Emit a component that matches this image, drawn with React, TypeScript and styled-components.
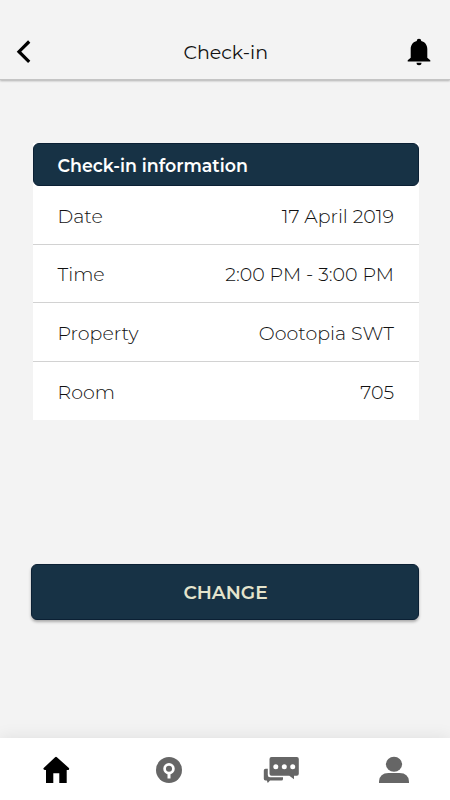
import React from "react";
import styled, { createGlobalStyle } from "styled-components";

const GlobalStyle = createGlobalStyle`
  * { box-sizing: border-box; }
  body { margin: 0; background: #f3f3f3; }
`;

const Screen = styled.div`
  width: 450px;
  height: 800px;
  display: flex;
  flex-direction: column;
  background: #f3f3f3;
  color: #111;
  font-family: Montserrat, Inter, "Open Sans", sans-serif;
  font-size: 19px;
  overflow: hidden;
`;

const TopBar = styled.header`
  height: 80px;
  flex: none;
  display: grid;
  grid-template-columns: 48px 1fr 50px;
  align-items: center;
  padding: 24px 6px 0 0;
  border-bottom: 1px solid #c4c4c4;
  box-shadow: 0 1px 2px rgba(0, 0, 0, 0.28);
`;

const IconButton = styled.button`
  display: flex;
  justify-content: center;
  align-items: center;
  padding: 0;
  border: 0;
  background: none;
  color: #000;
`;

const Title = styled.h1`
  margin: 0 0 0 9.5px;
  padding-top: 2px;
  font-size: 19px;
  font-weight: 400;
  line-height: 24px;
  text-align: center;
`;

const Content = styled.main`
  flex: 1;
  padding: 63px 31px 0 32.5px;
`;

const Card = styled.section`
  background: #fff;
`;

const CardHeader = styled.h2`
  margin: 0;
  height: 43px;
  padding: 1px 24px 0;
  display: flex;
  align-items: center;
  border-radius: 6px;
  border: 1px solid #0b2034;
  background: #173245;
  color: #fff;
  font-size: 17.4px;
  line-height: 23px;
  font-weight: 600;
`;

const Row = styled.div`
  height: 58.6px;
  display: flex;
  align-items: center;
  justify-content: space-between;
  padding: 3px 25px 0;
  font-weight: 300;
  border-bottom: 1px solid #d2d2d2;
  &:last-child {
    height: 58.2px;
    border-bottom: 0;
  }
`;

const ChangeButton = styled.button`
  display: block;
  width: 388px;
  height: 56px;
  margin: 144px 0 0 -1.5px;
  padding: 2px 0 0 1px;
  border: 1px solid #0b2034;
  border-radius: 6px;
  background: #173245;
  color: #e4e4cc;
  font: inherit;
  font-size: 18.6px;
  font-weight: 600;
  box-shadow: 0 2px 3px rgba(0, 0, 0, 0.3);
`;

const TabBar = styled.nav`
  height: 62px;
  flex: none;
  display: grid;
  grid-template-columns: repeat(4, 1fr);
  background: #fff;
  box-shadow: 0 0 16px rgba(0, 0, 0, 0.09);
`;

const Tab = styled.button<{ $active?: boolean }>`
  display: flex;
  align-items: center;
  justify-content: center;
  padding: 1px 0 0;
  border: 0;
  background: none;
  color: ${(p) => (p.$active ? "#000" : "#666")};
`;

const rows = [
  { label: "Date", value: "17 April 2019" },
  { label: "Time", value: "2:00 PM - 3:00 PM" },
  { label: "Property", value: "Oootopia SWT" },
  { label: "Room", value: "705" },
];

const BackIcon = () => (
  <svg width="16" height="24" viewBox="0 0 16 24">
    <path d="M13.2 1.5L3 11.7l10.2 10.2" fill="none" stroke="currentColor" strokeWidth="3.2" />
  </svg>
);

const BellIcon = () => (
  <svg width="24" height="28" viewBox="0 0 24 28">
    <path
      fill="currentColor"
      d="M12 .8c1.3 0 2.2.9 2.2 2.1 3.7.9 6.1 4 6.1 8v8.8l3 2.6v1.2H.7v-1.2l3-2.6v-8.8c0-4 2.4-7.1 6.1-8C9.8 1.7 10.7.8 12 .8z"
    />
    <path fill="currentColor" d="M9.5 24.8h5a2.5 2.5 0 0 1-5 0z" />
  </svg>
);

const HomeIcon = () => (
  <svg width="28" height="28" viewBox="0 0 28 28">
    <path
      fill="currentColor"
      d="M13.1 1.2q.9-.8 1.8 0l12 10.8q.6.7.1 1.4t-1.3.6h-1V27h-7.4V17.2h-6V27H4V14H3q-.9 0-1.4-.7t.1-1.300z"
    />
  </svg>
);

const KeyIcon = () => (
  <svg width="28" height="28" viewBox="0 0 28 28">
    <circle cx="14" cy="14" r="13" fill="currentColor" />
    <circle cx="14" cy="12.7" r="4.4" fill="none" stroke="#fff" strokeWidth="2.7" />
    <path d="M14 16.5v6" stroke="#fff" strokeWidth="3" />
  </svg>
);

const ChatIcon = () => (
  <svg width="36" height="28" viewBox="0 0 36 28">
    <path
      fill="currentColor"
      d="M2.500 12.800H4.800V19q0 2.200 2.200 2.200H20V23q0 1.500-1.500 1.500H7L4.800 27l-1-2.500H2.500Q.8 24.500.8 22.800v-8.300q0-1.700 1.700-1.700z"
    />
    <path
      fill="currentColor"
      d="M8.500 1h25.300q2 0 2 2v14.800q0 2-2 2H31V23.300l-4.700-3.500H8.500q-2 0-2-2V3q0-2 2-2z"
    />
    {[12.8, 21.3, 29.7].map((x) => (
      <circle key={x} cx={x} cy="10.8" r="2.5" fill="#fff" />
    ))}
  </svg>
);

const PersonIcon = () => (
  <svg width="32" height="28" viewBox="0 0 32 28">
    <ellipse cx="16" cy="8.3" rx="8.1" ry="7.5" fill="currentColor" />
    <path fill="currentColor" d="M1 27v-1.500Q1.500 17 10.500 17h11q9 0 9.500 8.500V27z" />
  </svg>
);

export default function App() {
  return (
    <Screen>
      <GlobalStyle />
      <TopBar>
        <IconButton aria-label="Back"><BackIcon /></IconButton>
        <Title>Check-in</Title>
        <IconButton aria-label="Notifications"><BellIcon /></IconButton>
      </TopBar>
      <Content>
        <Card>
          <CardHeader>Check-in information</CardHeader>
          {rows.map((row) => (
            <Row key={row.label}>
              <span>{row.label}</span>
              <span>{row.value}</span>
            </Row>
          ))}
        </Card>
        <ChangeButton>CHANGE</ChangeButton>
      </Content>
      <TabBar>
        <Tab $active aria-label="Home"><HomeIcon /></Tab>
        <Tab aria-label="Key"><KeyIcon /></Tab>
        <Tab aria-label="Messages"><ChatIcon /></Tab>
        <Tab aria-label="Profile"><PersonIcon /></Tab>
      </TabBar>
    </Screen>
  );
}
